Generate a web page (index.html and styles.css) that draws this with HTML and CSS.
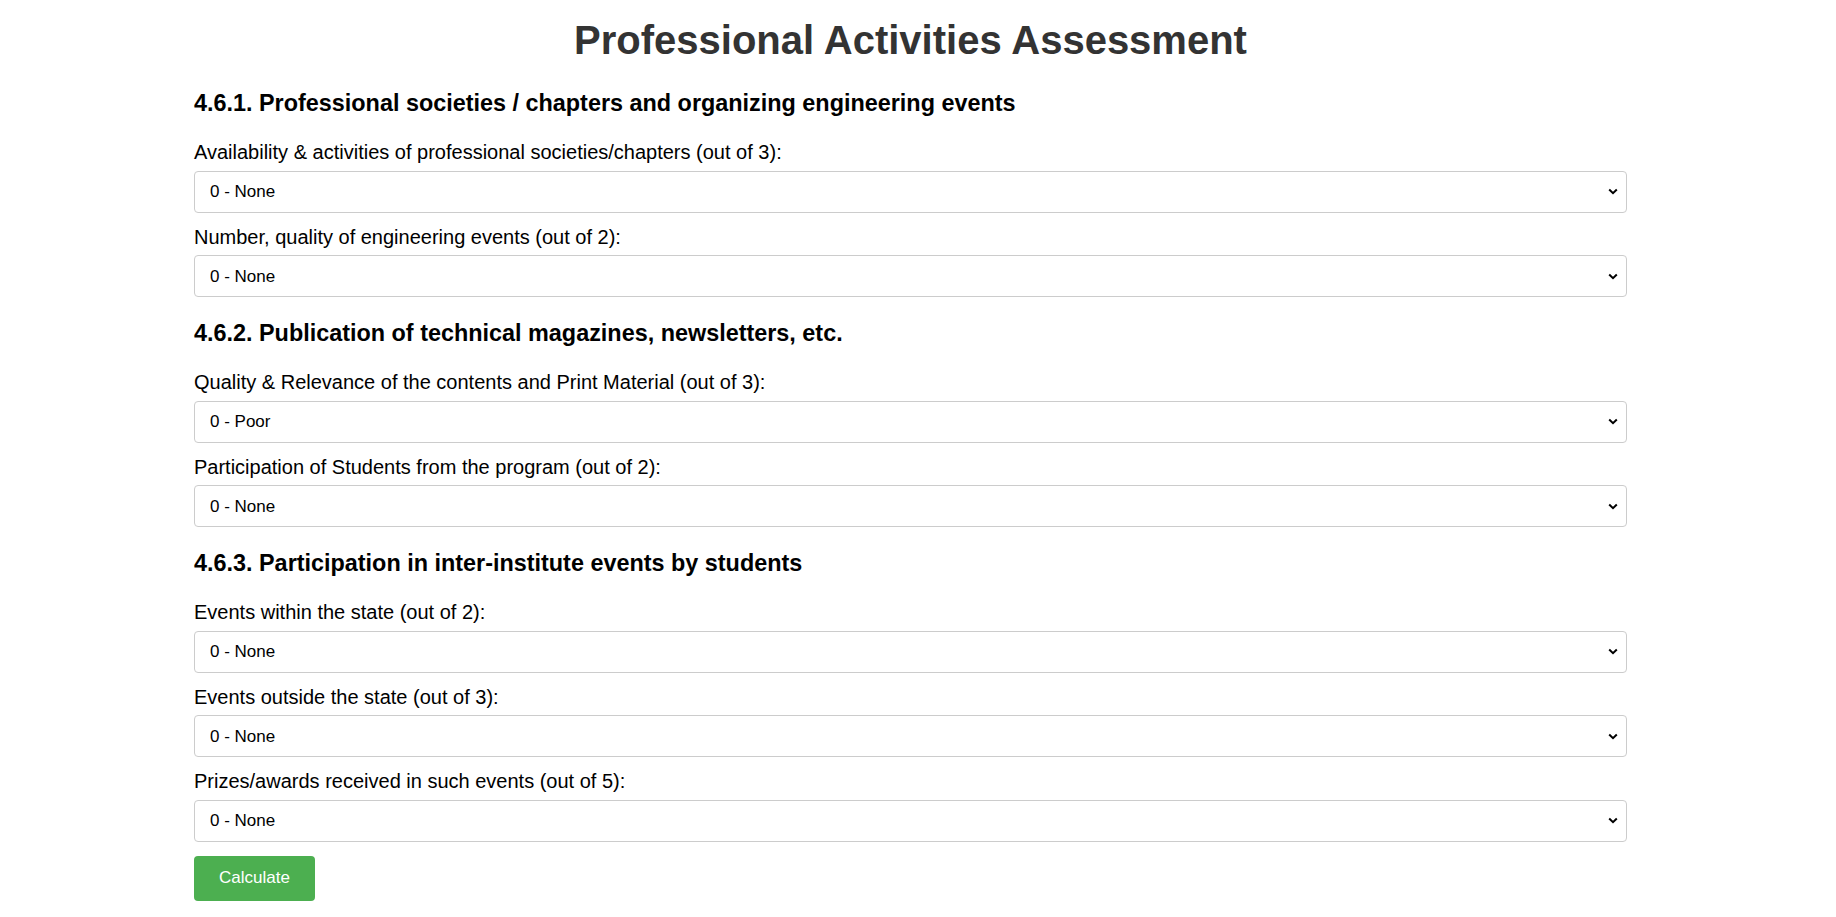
FILE: index.html
```html
<!DOCTYPE html>
<html lang="en">
<head>
<meta charset="utf-8">
<title>Professional Activities Assessment</title>
<link rel="stylesheet" href="styles.css">
</head>
<body>
<div class="container">
  <h1 class="title">Professional Activities Assessment</h1>
  <form class="form">
    <section class="section">
      <h3 class="section-title">4.6.1. Professional societies / chapters and organizing engineering events</h3>
      <div class="field">
        <label class="field-label" for="s1">Availability &amp; activities of professional societies/chapters (out of 3):</label>
        <select class="field-select" id="s1"><option>0 - None</option><option>1 - Low</option><option>2 - Medium</option><option>3 - High</option></select>
      </div>
      <div class="field">
        <label class="field-label" for="s2">Number, quality of engineering events (out of 2):</label>
        <select class="field-select" id="s2"><option>0 - None</option><option>1 - Some</option><option>2 - Many</option></select>
      </div>
    </section>
    <section class="section">
      <h3 class="section-title">4.6.2. Publication of technical magazines, newsletters, etc.</h3>
      <div class="field">
        <label class="field-label" for="s3">Quality &amp; Relevance of the contents and Print Material (out of 3):</label>
        <select class="field-select" id="s3"><option>0 - Poor</option><option>1 - Fair</option><option>2 - Good</option><option>3 - Excellent</option></select>
      </div>
      <div class="field">
        <label class="field-label" for="s4">Participation of Students from the program (out of 2):</label>
        <select class="field-select" id="s4"><option>0 - None</option><option>1 - Some</option><option>2 - High</option></select>
      </div>
    </section>
    <section class="section">
      <h3 class="section-title">4.6.3. Participation in inter-institute events by students</h3>
      <div class="field">
        <label class="field-label" for="s5">Events within the state (out of 2):</label>
        <select class="field-select" id="s5"><option>0 - None</option><option>1 - Some</option><option>2 - Many</option></select>
      </div>
      <div class="field">
        <label class="field-label" for="s6">Events outside the state (out of 3):</label>
        <select class="field-select" id="s6"><option>0 - None</option><option>1 - Few</option><option>2 - Some</option><option>3 - Many</option></select>
      </div>
      <div class="field">
        <label class="field-label" for="s7">Prizes/awards received in such events (out of 5):</label>
        <select class="field-select" id="s7"><option>0 - None</option><option>1</option><option>2</option><option>3</option><option>4</option><option>5</option></select>
      </div>
    </section>
    <div class="actions">
      <button type="button" class="btn-calc">Calculate</button>
    </div>
  </form>
</div>
</body>
</html>
```
FILE: styles.css
```css
html {
  overflow-y: scroll;
}
body {
  margin: 0;
  padding-right: 15px;
  background: #ffffff;
  font-family: "Liberation Sans", Arial, sans-serif;
  font-size: 20px;
  color: #000000;
}
.container {
  width: 1433px;
  margin: 0 auto;
  padding: 17px 0 24px;
}
.title {
  margin: 0 0 30px;
  font-size: 40px;
  line-height: 46px;
  font-weight: bold;
  color: #333333;
  text-align: center;
}
.form {
  display: flex;
  flex-direction: column;
}
.section {
  display: flex;
  flex-direction: column;
}
.section + .section {
  margin-top: 11.5px;
}
.section-title {
  margin: 0 0 27.5px;
  font-size: 23.4px;
  line-height: 21.5px;
  font-weight: bold;
  color: #000000;
}
.field {
  display: flex;
  flex-direction: column;
  margin-bottom: 14px;
}
.field-label {
  font-size: 20px;
  line-height: 20.7px;
  margin-bottom: 8px;
  color: #000000;
}
.field-select {
  box-sizing: border-box;
  width: 100%;
  height: 42px;
  padding: 10px 30px 10px 15px;
  border: 1px solid #cccccc;
  border-radius: 4px;
  background-color: #ffffff;
  background-image: url("data:image/svg+xml,%3Csvg xmlns='http://www.w3.org/2000/svg' width='10' height='7' viewBox='0 0 10 7'%3E%3Cpolyline points='1.2,1.5 5,5.2 8.8,1.5' fill='none' stroke='%23000' stroke-width='2'/%3E%3C/svg%3E");
  background-repeat: no-repeat;
  background-position: right 8px center;
  background-size: 10px 7px;
  -webkit-appearance: none;
  appearance: none;
  font-family: "Liberation Sans", Arial, sans-serif;
  font-size: 17px;
  color: #000000;
}
.actions {
  display: flex;
}
.btn-calc {
  height: 45px;
  padding: 0 25px;
  border: none;
  border-radius: 4px;
  background: #4caf50;
  color: #ffffff;
  font-family: "Liberation Sans", Arial, sans-serif;
  font-size: 17px;
  cursor: pointer;
}
```
